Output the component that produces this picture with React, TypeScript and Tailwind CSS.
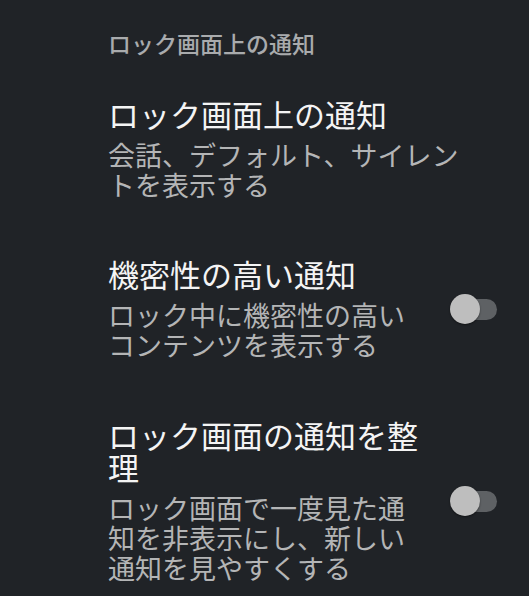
import React from 'react';

interface PrefRowProps {
    title: string;
    summary: string;
    toggle?: boolean;
    className?: string;
}

const Toggle: React.FC = () => (
    <div className="relative w-[47px] h-[30px] flex-shrink-0">
        <div className="absolute left-[3px] top-[5px] w-[44px] h-[21px] rounded-full bg-[#5e6164]" />
        <div className="absolute left-0 top-0 w-[30px] h-[30px] rounded-full bg-[#bebebe] shadow-[0_1px_2px_rgba(0,0,0,0.45)]" />
    </div>
);

const PrefRow: React.FC<PrefRowProps> = ({ title, summary, toggle = false, className = '' }) => {
    return (
        <div className={`flex items-center ${className}`}>
            <div className={toggle ? 'w-[314px]' : 'w-[370px]'}>
                <div className="text-[31px] leading-[32px] text-[#f4f4f4]">{title}</div>
                <div className="mt-[10px] text-[27px] leading-[30px] text-[#b4b5b6]">{summary}</div>
            </div>
            {toggle && (
                <div className="ml-[28px]">
                    <Toggle />
                </div>
            )}
        </div>
    );
};

export default function App() {
    return (
        <div
            className="w-[529px] h-[596px] overflow-hidden bg-[#202327] pl-[108px] pt-[28px]"
            style={{ fontFamily: '"Noto Sans CJK JP", "Noto Sans", sans-serif' }}
        >
            <div className="text-[23px] leading-[30px] font-medium text-[#a9abad]">ロック画面上の通知</div>
            <PrefRow
                className="mt-[40px]"
                title="ロック画面上の通知"
                summary="会話、デフォルト、サイレントを表示する"
            />
            <PrefRow
                className="mt-[58px]"
                title="機密性の高い通知"
                summary="ロック中に機密性の高いコンテンツを表示する"
                toggle
            />
            <PrefRow
                className="mt-[59px]"
                title="ロック画面の通知を整理"
                summary="ロック画面で一度見た通知を非表示にし、新しい通知を見やすくする"
                toggle
            />
        </div>
    );
}
